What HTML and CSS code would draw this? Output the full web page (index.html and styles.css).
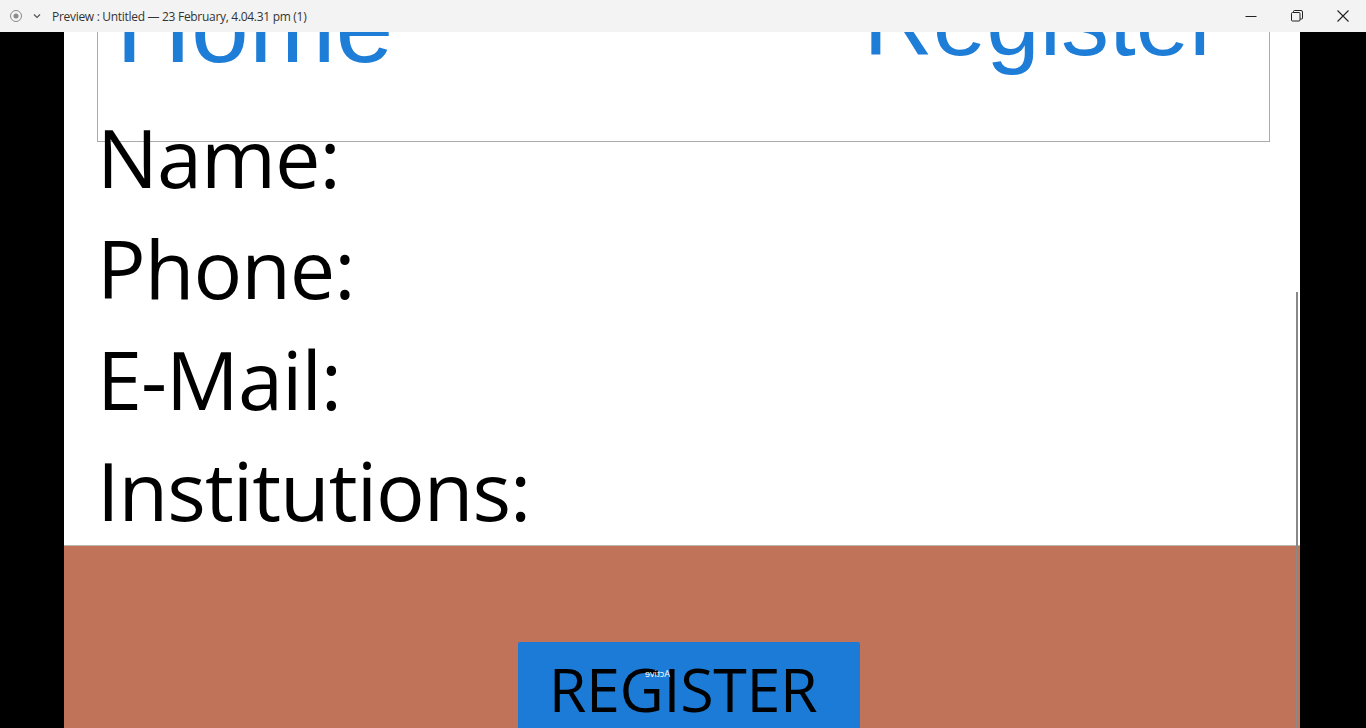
FILE: index.html
```html
<!DOCTYPE html>
<html lang="en">
<head>
<meta charset="utf-8">
<title>Preview</title>
<link rel="stylesheet" href="styles.css">
</head>
<body>
<div class="titlebar">
  <div class="tb-left">
    <svg class="tb-icon" width="14" height="14" viewBox="0 0 14 14"><circle cx="7" cy="7" r="5.5" fill="none" stroke="#8a8a8a" stroke-width="1"/><circle cx="7" cy="7" r="2.5" fill="#8a8a8a"/></svg>
    <svg class="tb-chev" width="10" height="10" viewBox="0 0 10 10"><path d="M2 3.5 L5 6.5 L8 3.5" fill="none" stroke="#555" stroke-width="1.2"/></svg>
    <span class="tb-title">Preview : Untitled — 23 February, 4.04.31 pm (1)</span>
  </div>
  <div class="tb-controls">
    <div class="tb-btn"><svg width="12" height="12" viewBox="0 0 12 12"><path d="M0.5 6.5 H11.5" stroke="#222" stroke-width="1"/></svg></div>
    <div class="tb-btn"><svg width="12" height="12" viewBox="0 0 12 12"><rect x="0.5" y="2.5" width="8.5" height="8.5" rx="1" fill="none" stroke="#222"/><path d="M2.5 2.5 V1.5 Q2.5 0.5 3.5 0.5 H10 Q11.5 0.5 11.5 2 V8.5 Q11.5 9 10.5 9 H9" fill="none" stroke="#222"/></svg></div>
    <div class="tb-btn"><svg width="12" height="12" viewBox="0 0 12 12"><path d="M0.5 0.5 L11.5 11.5 M11.5 0.5 L0.5 11.5" stroke="#222" stroke-width="1.1"/></svg></div>
  </div>
</div>
<div class="stage">
  <main class="page">
    <nav class="nav">
      <a class="nav-home">Home</a>
      <a class="nav-register">Register</a>
    </nav>
    <div class="fields">
      <div class="field">Name:</div>
      <div class="field">Phone:</div>
      <div class="field">E-Mail:</div>
      <div class="field">Institutions:</div>
    </div>
    <section class="footer">
      <button class="reg-btn">REGISTER<span class="ghost">Active</span></button>
    </section>
    <div class="scroll-thumb"></div>
  </main>
</div>
</body>
</html>
```
FILE: styles.css
```css
html, body {
  margin: 0;
  padding: 0;
  height: 100%;
  overflow: hidden;
  background: #000;
}
body {
  font-family: "Open Sans", "Noto Sans", sans-serif;
}
.titlebar {
  height: 32px;
  background: #f3f3f3;
  display: flex;
  justify-content: space-between;
  align-items: stretch;
}
.tb-left {
  display: flex;
  align-items: center;
  padding-left: 9px;
}
.tb-icon { margin-right: 9px; }
.tb-chev { margin-right: 10px; }
.tb-title {
  font-family: "Open Sans", "Noto Sans", sans-serif;
  font-size: 12px;
  color: #333;
  letter-spacing: -0.3px;
}
.tb-controls {
  display: flex;
}
.tb-btn {
  width: 46px;
  display: flex;
  align-items: center;
  justify-content: center;
}
.stage {
  height: 696px;
  display: flex;
  padding-left: 64px;
}
.page {
  position: relative;
  width: 1236px;
  height: 100%;
  background: #fff;
  overflow: hidden;
  display: flex;
  flex-direction: column;
}
.nav {
  box-sizing: border-box;
  height: 176px;
  margin: -66px 30px 0 33px;
  border: 1px solid #aaa;
  display: flex;
  justify-content: space-between;
  align-items: flex-start;
  padding: 0 48px 0 18px;
  font-family: "Liberation Sans", Arial, sans-serif;
  color: #1e7dd7;
  flex-shrink: 0;
}
.nav-home {
  font-size: 104px;
  line-height: 1.15;
}
.nav-register {
  font-size: 96px;
  line-height: 1.15;
}
.fields {
  margin-top: -41px;
  padding-left: 33px;
  flex-shrink: 0;
}
.field {
  font-size: 81px;
  line-height: 111px;
  letter-spacing: -1px;
  color: #000;
}
.footer {
  flex: 1;
  background: #c07359;
  border-top: 1px solid #bdb6b0;
  padding: 96px 0 0 454px;
  display: flex;
  align-items: flex-start;
}
.reg-btn {
  position: relative;
  width: 342px;
  border: none;
  border-radius: 2px;
  background: #1c7bd6;
  color: #000;
  font-family: "Open Sans", "Noto Sans", sans-serif;
  font-size: 61px;
  letter-spacing: -0.4px;
  line-height: 1;
  padding: 16px 12px 40px 0;
  text-align: center;
  display: block;
  box-sizing: border-box;
}
.ghost {
  position: absolute;
  left: 127px;
  top: 27px;
  font-size: 9px;
  letter-spacing: 0;
  color: #fff;
  transform: scaleX(-1);
}
.scroll-thumb {
  position: absolute;
  right: 2px;
  top: 260px;
  width: 2px;
  bottom: 0;
  background: #888;
}
```
